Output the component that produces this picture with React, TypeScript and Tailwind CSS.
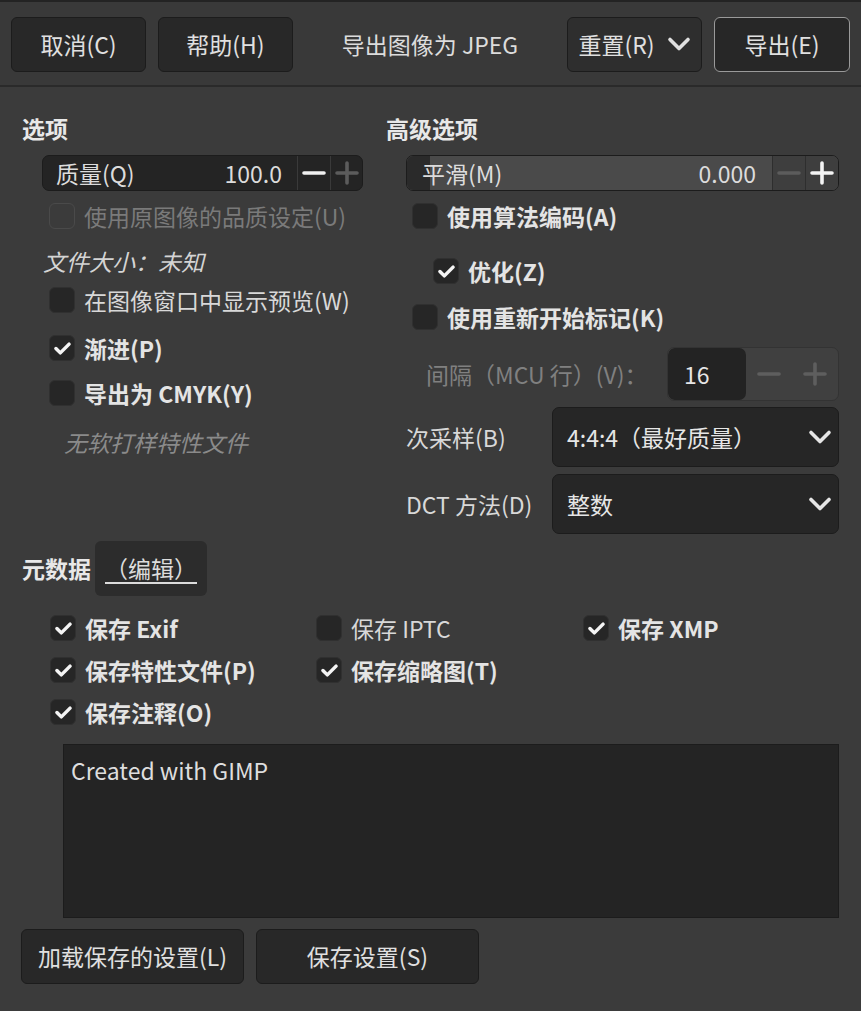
import React from "react";

const FONT = { fontFamily: '"Noto Sans CJK SC", "Noto Sans", sans-serif' };

function Chevron({ className = "" }: { className?: string }) {
  return (
    <svg viewBox="0 0 24 16" className={className} fill="none" stroke="currentColor" strokeWidth={3.6} strokeLinecap="round" strokeLinejoin="round">
      <path d="M3 3.5 L12 12.5 L21 3.5" />
    </svg>
  );
}

function Minus({ className = "" }: { className?: string }) {
  return (
    <svg viewBox="0 0 24 24" className={className} fill="none" stroke="currentColor" strokeWidth={3.6} strokeLinecap="round">
      <path d="M2 12 H22" />
    </svg>
  );
}

function Plus({ className = "" }: { className?: string }) {
  return (
    <svg viewBox="0 0 24 24" className={className} fill="none" stroke="currentColor" strokeWidth={3.6} strokeLinecap="round">
      <path d="M2 12 H22 M12 2 V22" />
    </svg>
  );
}

function Check({ checked, disabled }: { checked?: boolean; disabled?: boolean }) {
  return (
    <span
      className={
        "flex h-[26px] w-[26px] shrink-0 items-center justify-center rounded-[6px] border " +
        (disabled ? "border-[#4a4a4a] bg-transparent" : "border-[#303030] bg-[#262626]")
      }
    >
      {checked && (
        <svg viewBox="0 0 24 24" className="h-[21px] w-[21px]" fill="none" stroke="#f4f4f4" strokeWidth={4} strokeLinecap="round" strokeLinejoin="round">
          <path d="M4.5 12 L9.5 17 L19.5 7" />
        </svg>
      )}
    </span>
  );
}

function CheckRow({
  label,
  checked,
  bold,
  disabled,
  className = "",
}: {
  label: string;
  checked?: boolean;
  bold?: boolean;
  disabled?: boolean;
  className?: string;
}) {
  return (
    <div className={"flex items-center gap-[9px] " + className}>
      <Check checked={checked} disabled={disabled} />
      <span className={(bold ? "font-bold text-[#e4e4e4] " : "text-[#d8d8d8] ") + (disabled ? "!text-[#7a7a7a]" : "")}>{label}</span>
    </div>
  );
}

function Btn({ children, className = "" }: { children: React.ReactNode; className?: string }) {
  return (
    <button className={"flex h-[55px] items-center justify-center rounded-[6px] border border-[#1c1c1c] bg-[#282828] text-[#e0e0e0] " + className}>
      {children}
    </button>
  );
}

export default function App() {
  return (
    <div style={FONT} className="flex h-[1011px] w-[861px] flex-col bg-[#3b3b3b] text-[23px] leading-none text-[#dcdcdc]">
      {/* header bar */}
      <div className="flex h-[87px] shrink-0 items-center gap-[12px] border-t-2 border-b-2 border-t-[#232323] border-b-[#2a2a2a] bg-[#393939] px-[11px] pt-[1px]">
        <Btn className="w-[135px]">取消(C)</Btn>
        <Btn className="w-[135px]">帮助(H)</Btn>
        <div className="flex-1 text-center text-[#dcdcdc]">导出图像为 JPEG</div>
        <Btn className="w-[135px] gap-[12px] !bg-[#2e2e2e]">
          <span>重置(R)</span>
          <Chevron className="h-[16px] w-[24px]" />
        </Btn>
        <Btn className="w-[136px] !border-[#9a9a9a] !bg-[#272727]">导出(E)</Btn>
      </div>

      <div className="flex flex-col px-[22px]">
        <div className="flex">
          {/* options */}
          <div className="flex w-[366px] flex-col pt-[23px]">
            <div className="flex h-9 items-center font-bold text-[#e8e8e8]">选项</div>
            <div className="ml-[20px] mt-[9px] flex h-9 w-[321px] overflow-hidden rounded-[7px] border border-[#1c1c1c] bg-[#242424]">
              <div className="flex flex-1 items-center justify-between pl-[13px] pr-[15px]">
                <span>质量(Q)</span>
                <span>100.0</span>
              </div>
              <div className="flex w-[33px] items-center justify-center border-l border-[#3a3a3a] text-[#f0f0f0]">
                <Minus className="h-[24px] w-[24px]" />
              </div>
              <div className="flex w-[32px] items-center justify-center border-l border-[#3a3a3a] text-[#5c5c5c]">
                <Plus className="h-[24px] w-[24px]" />
              </div>
            </div>
            <CheckRow className="ml-[27px] mt-[3px] h-[44px]" label="使用原图像的品质设定(U)" disabled />
            <div className="ml-[21px] flex h-[46px] items-center italic text-[#d4d4d4]">文件大小：未知</div>
            <CheckRow className="ml-[27px] h-[32px]" label="在图像窗口中显示预览(W)" />
            <CheckRow className="ml-[27px] mt-[16px] h-[32px]" label="渐进(P)" checked bold />
            <CheckRow className="ml-[27px] mt-[13px] h-[32px]" label="导出为 CMYK(Y)" bold />
            <div className="ml-[42px] mt-[17px] flex h-[32px] items-center italic text-[#8a8a8a]">无软打样特性文件</div>
          </div>

          {/* advanced options */}
          <div className="flex flex-1 flex-col pt-[23px]">
            <div className="flex h-9 items-center font-bold text-[#e8e8e8]">高级选项</div>
            <div className="ml-[20px] mt-[9px] flex h-9 overflow-hidden rounded-[7px] border border-[#1c1c1c] bg-[#4a4a4a]">
              <div className="relative flex flex-1 items-center justify-between pl-[15px] pr-[16px]">
                <div className="absolute inset-y-0 left-0 w-[23px] bg-[#2a2a2a]" />
                <span className="relative">平滑(M)</span>
                <span>0.000</span>
              </div>
              <div className="flex w-[33px] items-center justify-center border-l border-[#2e2e2e] bg-[#3e3e3e] text-[#5c5c5c]">
                <Minus className="h-[24px] w-[24px]" />
              </div>
              <div className="flex w-[33px] items-center justify-center border-l border-[#2e2e2e] bg-[#3e3e3e] text-[#f4f4f4]">
                <Plus className="h-[24px] w-[24px]" />
              </div>
            </div>
            <CheckRow className="ml-[26px] mt-[9px] h-[32px]" label="使用算法编码(A)" bold />
            <CheckRow className="ml-[47px] mt-[23px] h-[32px]" label="优化(Z)" checked bold />
            <CheckRow className="ml-[26px] mt-[14px] h-[32px]" label="使用重新开始标记(K)" bold />
            <div className="mt-[14px] flex h-[54px] items-center">
              <span className="ml-[40px] w-[241px] text-[#808080]">间隔（MCU 行）(V)：</span>
              <div className="flex h-full flex-1 overflow-hidden rounded-[7px] border border-[#333333] bg-[#404040]">
                <div className="flex w-[78px] items-center rounded-[7px] bg-[#232323] pl-[16px] text-[#e6e6e6]">16</div>
                <div className="flex w-[46px] items-center justify-center text-[#5e5e5e]">
                  <Minus className="h-[24px] w-[24px]" />
                </div>
                <div className="flex w-[46px] items-center justify-center text-[#5e5e5e]">
                  <Plus className="h-[24px] w-[24px]" />
                </div>
              </div>
            </div>
            <div className="ml-[20px] mt-[6px] flex h-[60px] items-center">
              <span className="w-[146px] text-[#d8d8d8]">次采样(B)</span>
              <div className="flex h-full flex-1 items-center justify-between rounded-[7px] border border-[#1c1c1c] bg-[#262626] pl-[14px] pr-[6px] text-[#e6e6e6]">
                <span>4:4:4（最好质量）</span>
                <Chevron className="h-[16px] w-[24px]" />
              </div>
            </div>
            <div className="ml-[20px] mt-[7px] flex h-[60px] items-center">
              <span className="w-[146px] text-[#d8d8d8]">DCT 方法(D)</span>
              <div className="flex h-full flex-1 items-center justify-between rounded-[7px] border border-[#1c1c1c] bg-[#262626] pl-[14px] pr-[6px] text-[#e6e6e6]">
                <span>整数</span>
                <Chevron className="h-[16px] w-[24px]" />
              </div>
            </div>
          </div>
        </div>

        {/* metadata */}
        <div className="mt-[7px] flex h-[55px] items-center gap-[4px]">
          <span className="font-bold text-[#e8e8e8]">元数据</span>
          <span className="flex h-full items-center rounded-[6px] bg-[#2c2c2c] px-[10px]">
            <span className="underline decoration-[1.5px] underline-offset-[4px]">（编辑）</span>
          </span>
        </div>
        <div className="ml-[28px] mt-[11px] grid grid-cols-[266px_267px_1fr] auto-rows-[42px]">
          <CheckRow label="保存 Exif" checked bold />
          <CheckRow label="保存 IPTC" />
          <CheckRow label="保存 XMP" checked bold />
          <CheckRow label="保存特性文件(P)" checked bold />
          <CheckRow label="保存缩略图(T)" checked bold />
          <div />
          <CheckRow label="保存注释(O)" checked bold />
        </div>
        <div className="ml-[41px] mt-[11px] h-[174px] border border-[#1c1c1c] bg-[#242424] px-[7px] pt-[14px] text-[#dedede]">
          Created with GIMP
        </div>
        <div className="-ml-[1px] mt-[11px] flex gap-[12px]">
          <Btn className="w-[223px]">加载保存的设置(L)</Btn>
          <Btn className="w-[223px]">保存设置(S)</Btn>
        </div>
      </div>
    </div>
  );
}
